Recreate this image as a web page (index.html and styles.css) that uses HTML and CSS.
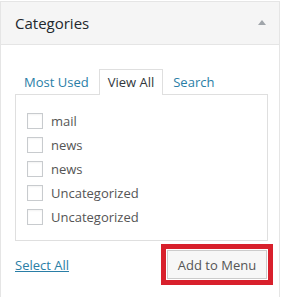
FILE: index.html
```html
<!DOCTYPE html>
<html lang="en">
<head>
  <meta charset="UTF-8">
  <title>Categories</title>
  <link rel="stylesheet" href="styles.css">
</head>
<body>
  <div class="panel">
    <div class="panel-head">
      <h3>Categories</h3>
      <span class="toggle"></span>
    </div>
    <div class="panel-body">
      <ul class="tabs">
        <li><a href="#">Most Used</a></li>
        <li class="active"><span>View All</span></li>
        <li><a href="#">Search</a></li>
      </ul>
      <div class="list">
        <label class="row"><span class="check"></span>mail</label>
        <label class="row"><span class="check"></span>news</label>
        <label class="row"><span class="check"></span>news</label>
        <label class="row"><span class="check"></span>Uncategorized</label>
        <label class="row"><span class="check"></span>Uncategorized</label>
      </div>
      <div class="actions">
        <a href="#" class="select-all">Select All</a>
        <button class="btn">Add to Menu</button>
      </div>
    </div>
  </div>
</body>
</html>
```

FILE: styles.css
```css
body{
  margin: 0;
  padding-top: 1px;
  background: #fff;
  font-family: "Open Sans", "Noto Sans", sans-serif;
  font-size: 13px;
  color: #444;
}
h3,ul{
  margin: 0;
  padding: 0;
  list-style: none;
}
.panel{
  width: 280px;
  height: 296px;
  box-sizing: border-box;
  border: 1px solid #e5e5e5;
  border-bottom: none;
}
.panel-head{
  height: 42px;
  display: flex;
  align-items: center;
  justify-content: space-between;
  padding: 0 13px 0 14px;
  background: #f5f5f5;
  border-bottom: 1px solid #e5e5e5;
}
.panel-head h3{
  font-size: 15px;
  font-weight: 400;
  color: #23282d;
}
.toggle{
  width: 0;
  height: 0;
  border-left: 4px solid transparent;
  border-right: 4px solid transparent;
  border-bottom: 5px solid #a0a5aa;
  margin-top: -1px;
}
.panel-body{
  padding: 24px 11px 0 14px;
}
.tabs{
  display: flex;
  gap: 1px;
}
.tabs li{
  height: 24px;
  line-height: 24px;
  padding: 0 8px;
  border: 1px solid transparent;
  border-bottom: none;
}
.tabs a{
  color: #2a7ea6;
  text-decoration: none;
}
.tabs .active{
  position: relative;
  background: #fff;
  border-color: #dfdfdf;
  color: #32373c;
  margin-bottom: -1px;
  height: 25px;
}
.list{
  height: 147px;
  box-sizing: border-box;
  border: 1px solid #dfdfdf;
  padding: 14px 11px 0;
}
.row{
  display: flex;
  align-items: center;
  height: 24px;
  gap: 8px;
  color: #555;
}
.check{
  width: 16px;
  height: 16px;
  box-sizing: border-box;
  border: 1px solid #c8cbce;
  background: #fff;
  box-shadow: inset 0 1px 2px rgba(0,0,0,.05);
}
.actions{
  display: flex;
  justify-content: space-between;
  align-items: center;
  margin-top: 9px;
  padding-right: 1px;
}
.select-all{
  color: #2a7ea6;
  text-decoration: underline;
}
.btn{
  width: 100px;
  height: 29px;
  padding: 0;
  font-family: inherit;
  font-size: 13px;
  color: #555;
  background: #f7f7f7;
  border: 1px solid #ccc;
  border-radius: 0;
  box-shadow: 0 0 0 1px #fff, 0 0 0 6px #d8202c;
}
```
